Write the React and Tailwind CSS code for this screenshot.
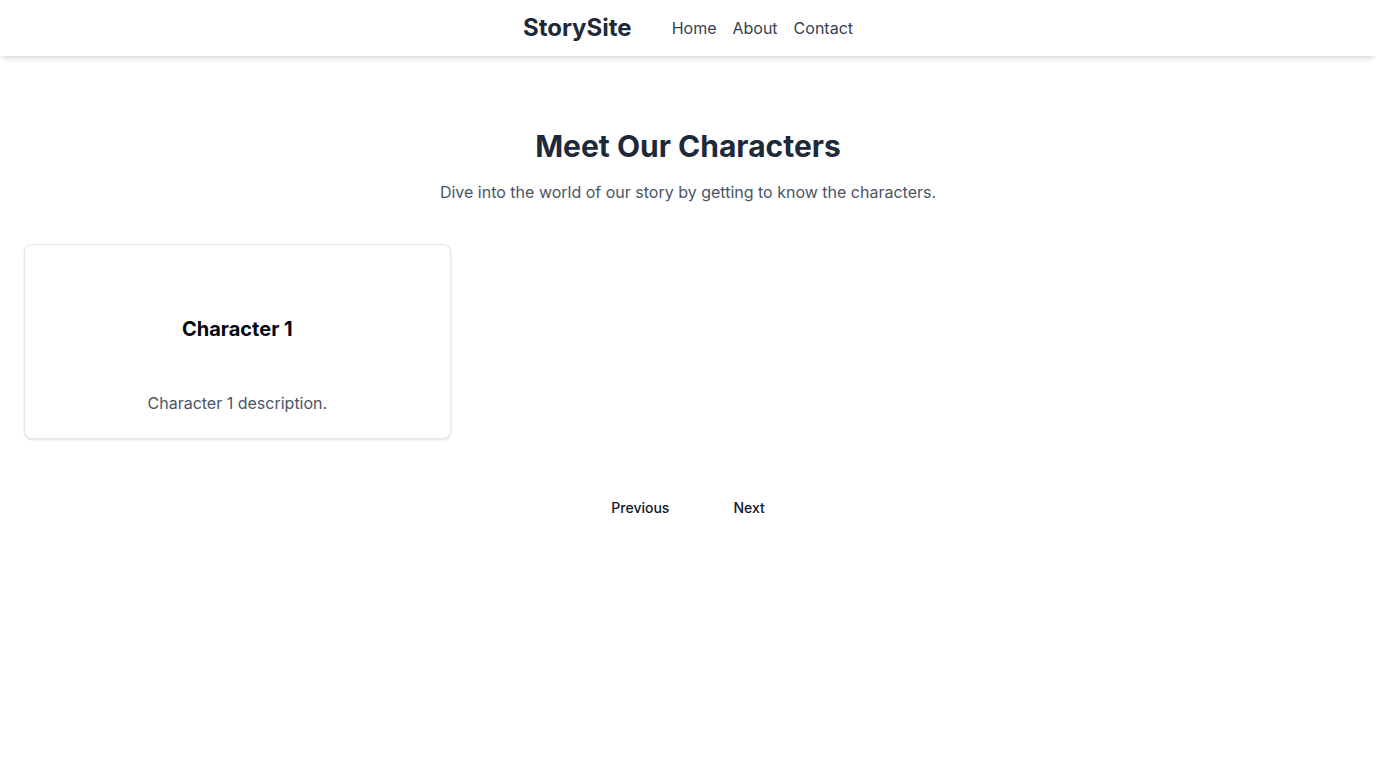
export default function App() {
  return (
    <div className="min-h-screen bg-white" style={{ fontFamily: 'Inter, "Noto Sans", sans-serif' }}>
      <header className="h-14 bg-white shadow-md flex items-center justify-center gap-10">
        <div className="text-2xl font-bold text-gray-800">StorySite</div>
        <nav className="flex items-center gap-4 text-base text-gray-700">
          <a href="#">Home</a>
          <a href="#">About</a>
          <a href="#">Contact</a>
        </nav>
      </header>
      <main className="px-6 pt-[72px]">
        <h1 className="text-3xl font-bold text-gray-800 text-center">Meet Our Characters</h1>
        <p className="mt-4 text-base text-gray-600 text-center">Dive into the world of our story by getting to know the characters.</p>
        <div className="mt-10 grid grid-cols-3 gap-6">
          <div className="border border-gray-200 rounded-lg shadow-sm bg-white px-6 pt-[70px] pb-[23px] text-center">
            <h2 className="text-xl font-bold text-gray-950">Character 1</h2>
            <p className="mt-12 text-base text-gray-600">Character 1 description.</p>
          </div>
        </div>
        <div className="mt-[51px] flex justify-center gap-8">
          <button className="px-4 py-2 text-sm font-medium text-gray-900">Previous</button>
          <button className="px-4 py-2 text-sm font-medium text-gray-900">Next</button>
        </div>
      </main>
    </div>
  );
}
